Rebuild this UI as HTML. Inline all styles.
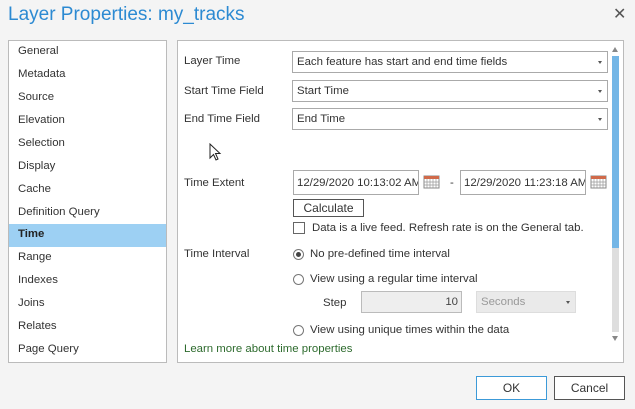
<!DOCTYPE html>
<html><head><style>
body{margin:0;width:635px;height:409px;background:#f4f4f4;font-family:"Liberation Sans",sans-serif;font-size:11.4px;color:#333;position:relative;overflow:hidden}
.a{position:absolute;white-space:nowrap}
.box{position:absolute;background:#fff;border:1px solid #bbb;box-sizing:border-box}
.dd{position:absolute;background:#fff;border:1px solid #aaa;box-sizing:border-box;padding:4px 4px;white-space:nowrap;overflow:hidden}
.dd.s:after{content:"";position:absolute;right:5px;top:9px;border:2.5px solid transparent;border-top:3px solid #555}
.li{position:absolute;left:9px;color:#333}
.rad{position:absolute;width:11px;height:11px;border:1px solid #777;border-radius:50%;box-sizing:border-box;background:#fff}
.cal{position:absolute;width:17px;height:15px}
.btn{position:absolute;border:1px solid #999;background:#fff;box-sizing:border-box;text-align:center;font-size:12px}
</style></head><body>
<div class="a" style="left:8px;top:4px;font-size:19px;color:#2c8ad2">Layer Properties: my_tracks</div>
<div class="a" style="left:613px;top:4px;font-size:16px;color:#555">✕</div>

<div class="box" style="left:8px;top:40px;width:159px;height:323px">
<div class="li" style="top:4px">General</div>
<div class="li" style="top:27px">Metadata</div>
<div class="li" style="top:50px">Source</div>
<div class="li" style="top:73px">Elevation</div>
<div class="li" style="top:96px">Selection</div>
<div class="li" style="top:119px">Display</div>
<div class="li" style="top:142px">Cache</div>
<div class="li" style="top:165px">Definition Query</div>
<div style="position:absolute;left:0;top:183px;width:157px;height:23px;background:#9dd0f3"></div>
<div class="li" style="top:187px;font-weight:bold;color:#222">Time</div>
<div class="li" style="top:210px">Range</div>
<div class="li" style="top:233px">Indexes</div>
<div class="li" style="top:256px">Joins</div>
<div class="li" style="top:279px">Relates</div>
<div class="li" style="top:302px">Page Query</div>
</div>

<div class="box" style="left:177px;top:40px;width:447px;height:323px"></div>
<div class="a" style="left:612px;top:47px;border:3.5px solid transparent;border-bottom:5px solid #888;border-top:0"></div>
<div class="a" style="left:612px;top:56px;width:7px;height:192px;background:#74b6e6"></div>
<div class="a" style="left:612px;top:248px;width:7px;height:84px;background:#dedede"></div>
<div class="a" style="left:612px;top:336px;border:3.5px solid transparent;border-top:5px solid #888;border-bottom:0"></div>

<div class="a" style="left:184px;top:55px">Layer Time</div>
<div class="dd s" style="left:292px;top:51px;width:316px;height:22px">Each feature has start and end time fields</div>
<div class="a" style="left:184px;top:85px">Start Time Field</div>
<div class="dd s" style="left:292px;top:80px;width:316px;height:22px">Start Time</div>
<div class="a" style="left:184px;top:113px">End Time Field</div>
<div class="dd s" style="left:292px;top:108px;width:316px;height:22px">End Time</div>

<svg class="a" style="left:209px;top:143px" width="14" height="20"><path d="M1 1 L1 15 L4.5 11.5 L7 17 L9 16 L6.5 10.5 L11 10.5 Z" fill="#fff" stroke="#222" stroke-width="1"/></svg>

<div class="a" style="left:184px;top:177px">Time Extent</div>
<div class="dd" style="left:293px;top:170px;width:126px;height:25px;padding:6px 3px">12/29/2020 10:13:02 AM</div>
<div class="a" style="left:450px;top:177px">-</div>
<div class="dd" style="left:460px;top:170px;width:126px;height:25px;padding:6px 3px">12/29/2020 11:23:18 AM</div>
<svg class="cal" style="left:423px;top:174px" viewBox="0 0 17 15"><rect x="1" y="2" width="15" height="12" fill="#fff" stroke="#888"/><rect x="1" y="2" width="15" height="3" fill="#d06a4a"/><path d="M4 5v9M7 5v9M10 5v9M13 5v9M1 8h15M1 11h15" stroke="#999" stroke-width=".7"/></svg>
<svg class="cal" style="left:590px;top:174px" viewBox="0 0 17 15"><rect x="1" y="2" width="15" height="12" fill="#fff" stroke="#888"/><rect x="1" y="2" width="15" height="3" fill="#d06a4a"/><path d="M4 5v9M7 5v9M10 5v9M13 5v9M1 8h15M1 11h15" stroke="#999" stroke-width=".7"/></svg>
<div class="btn" style="left:293px;top:199px;width:71px;height:18px;border:1px solid #555;line-height:16px">Calculate</div>
<div class="a" style="left:293px;top:222px;width:12px;height:12px;border:1px solid #666;background:#fff;box-sizing:border-box"></div>
<div class="a" style="left:312px;top:222px">Data is a live feed. Refresh rate is on the General tab.</div>

<div class="a" style="left:184px;top:248px">Time Interval</div>
<div class="rad" style="left:293px;top:249px"><div style="position:absolute;left:2px;top:2px;width:5px;height:5px;border-radius:50%;background:#444"></div></div>
<div class="a" style="left:310px;top:248px">No pre-defined time interval</div>
<div class="rad" style="left:293px;top:274px"></div>
<div class="a" style="left:310px;top:273px">View using a regular time interval</div>
<div class="a" style="left:323px;top:297px">Step</div>
<div class="a" style="left:361px;top:291px;width:101px;height:22px;border:1px solid #bbb;background:#eee;box-sizing:border-box;text-align:right;padding:4px 3px 0 0;color:#444">10</div>
<div class="dd s" style="left:476px;top:291px;width:100px;height:22px;background:#eaeaea;border-color:#ddd;color:#999">Seconds</div>
<div class="rad" style="left:293px;top:325px"></div>
<div class="a" style="left:310px;top:324px">View using unique times within the data</div>
<div class="a" style="left:184px;top:343px;color:#2e6b2e">Learn more about time properties</div>

<div class="btn" style="left:476px;top:376px;width:71px;height:24px;border-color:#3c9ad8;line-height:22px">OK</div>
<div class="btn" style="left:554px;top:376px;width:71px;height:24px;border-color:#555;line-height:22px">Cancel</div>
</body></html>
